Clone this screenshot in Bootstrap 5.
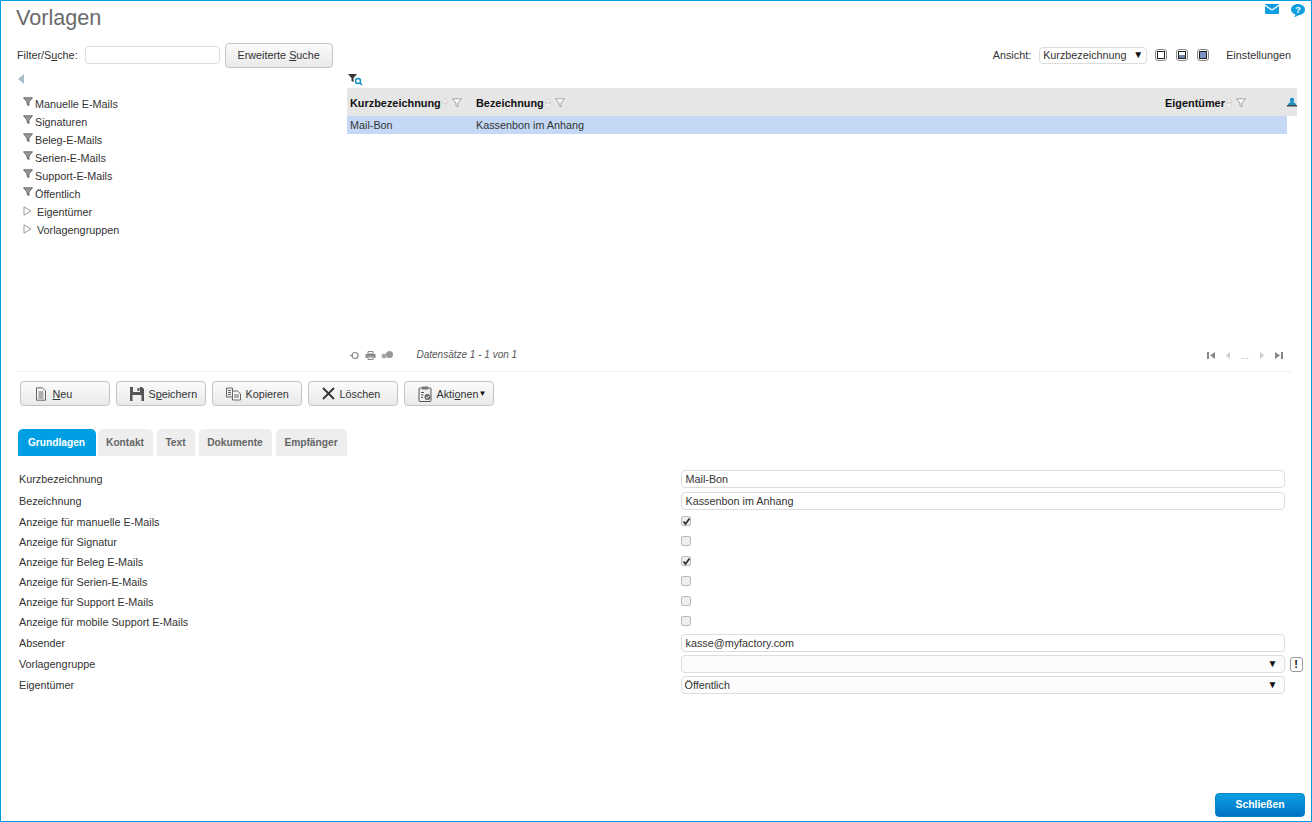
<!DOCTYPE html>
<html lang="de">
<head>
<meta charset="utf-8">
<title>Vorlagen</title>
<link href="https://cdn.jsdelivr.net/npm/bootstrap@5.3.0/dist/css/bootstrap.min.css" rel="stylesheet">
<style>
html,body{height:100%;margin:0;overflow:hidden}
body{font-family:"Liberation Sans",Arial,sans-serif;font-size:10.8px;color:#333;background:#fff;line-height:14px}
.frame{height:822px;width:1312px;border:solid #009fe3;border-width:1.5px 1px 1px 1.5px;display:flex;flex-direction:column;position:relative}
.head-row{height:29px;padding:0 6px 0 15px}
.page-title{font-size:21.6px;line-height:34px;color:#6a6a6a;margin:0;font-weight:400}
.top-icons{gap:12px;padding-top:3px}
.filter-row{height:29px;margin-top:10.5px;padding:0 20px 0 16px}
.fld{height:18px;border:1px solid #ddd;border-radius:4px;background:#fff;padding:0 3px;font:inherit;color:#333;outline:0;box-sizing:border-box}
.fld-search{width:135px;margin:0 5px 0 7px}
.tool-btn{height:25px;border:1px solid #c4c4c4;border-radius:4px;background:linear-gradient(#fbfbfb,#e9e9e9);font-size:10.8px;color:#333;padding:0;line-height:23px;display:inline-flex;align-items:center;justify-content:center}
.tool-btn:hover{background:#eee;border-color:#c4c4c4;color:#333}
.search-btn{width:108px}
.view-sel{width:108px;height:17px;border:1px solid #ddd;border-radius:4px;padding:0 3px 0 3px;margin:0 8px 0 8px}
.view-box{width:12px;height:12px;margin-right:9px;display:block}
.settings-lnk{margin-left:8px;color:#333;margin-right:0}
.main-area{height:302px;display:flex;margin-left:15.5px;border-bottom:1px dotted #e2e2e2;margin-right:20px}
.tree-pane{width:330px;flex:none}
.collapse-arrow{display:block;margin:4px 0 0 1px}
.tree-list{list-style:none;margin:11px 0 0;padding:0 0 0 6px}
.tree-list li{height:18px;line-height:18px;display:flex;align-items:center;color:#333}
.tree-list svg{margin-right:2.5px;margin-top:-4px;flex:none}
.tree-list .expand svg{margin-right:5.5px;margin-top:-2px}
.grid-pane{width:950px;flex:none;display:flex;flex-direction:column}
.grid-tool{height:18px;padding-top:4px;padding-left:1px}
.grid-tbl{width:950px;table-layout:fixed;border-collapse:collapse;margin:0}
.grid-tbl th{height:28px;background:#e6e6e6;font-weight:700;color:#111;padding:2px 0 0 3.5px;white-space:nowrap;font-size:10.9px}
.grid-tbl td{height:18px;background:#c5d9f7;padding:0 0 0 3.5px;color:#333}
.grid-tbl td.off{background:#fff}
.grid-tbl svg{vertical-align:-1px;margin-left:1px}
.grid-fill{flex:1}
.pager{height:22px;color:#666;display:flex;align-items:flex-start;position:relative}
.pager-info{font-style:italic;margin-left:24px;font-size:10px;color:#555;line-height:14px;margin-top:-1px}
.pager-ic{gap:5px;padding:2px 0 0 3px}
.pager-nav{gap:10px;margin-left:auto;margin-right:14px;padding-top:3px;color:#aaa;font-size:9px;line-height:9px}
.action-row{height:25px;margin-top:9.5px;padding-left:18.5px;gap:6px}
.action-btn{width:90px;gap:5px;justify-content:flex-start;padding-left:13px}
.action-btn svg{flex:none}
.action-btn span{margin-top:1px}
.tabs-row{margin-top:23px;padding-left:16.5px;gap:4px;height:27px;border:0}
.tab-lnk{height:27px;display:block;background:#eee;color:#666;font-weight:700;font-size:10.2px;line-height:27px;text-align:center;border-radius:5px 5px 0 0;padding:0;text-decoration:none}
.tab-lnk:hover{color:#666}
.tab-on{background:#009fe3;color:#fff;margin-right:-2px}
.tab-on:hover{color:#fff}
.form-area{margin-top:12.5px;padding-left:18px}
.f-row{display:flex;align-items:center;height:21.5px}
.f-row.chk{height:20px}
.f-row.chk-end{margin-bottom:.5px}
.f-row.f-tight{height:21px}
.f-lab{width:661.5px;flex:none}
.f-in{width:604px;height:18px;border:1px solid #ddd;border-radius:4px;padding:0 4px;background:#fff;color:#333;display:flex;align-items:center;justify-content:space-between;box-sizing:border-box}
.f-sel{background:#fcfcfc;padding:0 6px 0 3px}
.tri{font-size:10px;color:#111;line-height:10px}
.mini-tri{font-size:8px;margin-left:-5px}
.chk-box{width:10px;height:10px;border:1px solid #bbb;border-radius:2px;background:#eee;margin:0 0 2px 0;display:block;position:relative}
.bang{width:13px;height:15px;border:1px solid #999;border-radius:3px;margin-left:5px;font-weight:700;font-size:11px;line-height:13px;text-align:center;color:#111}
.close-row{position:absolute;right:6px;bottom:4px}
.close-btn{width:90px;height:24px;background:linear-gradient(#0a9fe2,#0273c3);border:1px solid #0a83cc;border-radius:4px;color:#fff;font-weight:700;font-size:10.4px;padding:0;line-height:22px}
.close-btn:hover{background:#0a8fd2;color:#fff;border-color:#0a83cc}
u{text-underline-offset:1px}
</style>
</head>
<body>
<svg width="0" height="0" class="position-absolute">
<defs>
<symbol id="funnel" viewBox="0 0 10 10"><path d="M.5.8h9L6 5v3.6L4 7.4V5z" fill="#999" stroke="#555" stroke-width=".8"/></symbol>
<symbol id="funnel-o" viewBox="0 0 10 10"><path d="M.5.8h9L6 5v3.8L4 7.6V5z" fill="#fff" stroke="#999" stroke-width=".9"/></symbol>
<symbol id="expand" viewBox="0 0 9 10"><path d="M1 .8 8 5 1 9.2z" fill="#fff" stroke="#999" stroke-width="1"/></symbol>
<symbol id="sort-up" viewBox="0 0 7 11"><path d="M3.500 0 0 5.500h7z" fill="#f4f4f4" stroke="#c4c4c4" stroke-width=".7"/></symbol>
<symbol id="sort" viewBox="0 0 7 11"><path d="M3.500 0 0 5h7z" fill="#f4f4f4" stroke="#c4c4c4" stroke-width=".7"/><path d="M3.500 11 0 6h7z" fill="#f4f4f4" stroke="#d4d4d4" stroke-width=".7"/></symbol>
<symbol id="x-doc" viewBox="0 0 14 14"><path d="M2.500.8h6l3 3v9.400h-9z" fill="#f4f4f4" stroke="#666"/><path d="M4.500 5h5M4.500 7h5M4.500 9h5M4.500 11h5" stroke="#666"/></symbol>
</defs>
</svg>
<div class="frame">
  <div class="head-row d-flex justify-content-between align-items-start">
    <h1 class="page-title">Vorlagen</h1>
    <div class="top-icons d-flex">
      <svg width="14" height="10" viewBox="0 0 14 10"><rect width="14" height="10" rx="1" fill="#0f9fe0"/><path d="M0 1.200 7 6l7-4.800" fill="none" stroke="#fff" stroke-width="1.200"/></svg>
      <svg width="14" height="13" viewBox="0 0 14 13"><path d="M7 0c3.900 0 7 2.400 7 5.600s-3 5.600-6.600 5.600c-.9.8-2.400 1.500-4.200 1.700.8-.7 1.100-1.500 1.200-2.300C1.900 9.700 0 7.900 0 5.600 0 2.400 3.100 0 7 0z" fill="#0f9fe0"/><text x="7" y="9" text-anchor="middle" font-size="9" font-weight="700" fill="#fff" font-family="Liberation Sans">?</text></svg>
    </div>
  </div>
  <div class="filter-row d-flex align-items-center">
    <label for="q" class="m-0">Filter/S<u>u</u>che:</label>
    <input id="q" class="fld fld-search" type="text">
    <button type="button" class="btn tool-btn search-btn">Erweiterte&nbsp;<u>S</u>uche</button>
    <span class="ms-auto">Ansicht:</span>
    <div class="view-sel d-flex justify-content-between align-items-center"><span>Kurzbezeichnung</span><span class="tri">▼</span></div>
    <svg class="view-box" viewBox="0 0 12 12"><rect x=".5" y=".5" width="11" height="11" rx="2.500" fill="#fff" stroke="#888"/><rect x="2.500" y="2.500" width="7" height="7" fill="#fff" stroke="#222"/></svg>
    <svg class="view-box" viewBox="0 0 12 12"><rect x=".5" y=".5" width="11" height="11" rx="2.500" fill="#fff" stroke="#888"/><rect x="2.500" y="2.500" width="7" height="7" fill="#fff" stroke="#222"/><rect x="3" y="6" width="6" height="3" fill="#6d82a8"/></svg>
    <svg class="view-box" viewBox="0 0 12 12"><rect x=".5" y=".5" width="11" height="11" rx="2.500" fill="#fff" stroke="#888"/><rect x="2.500" y="2.500" width="7" height="7" fill="#7c94c4" stroke="#222"/></svg>
    <span class="settings-lnk">Einstellungen</span>
  </div>
  <div class="main-area">
    <div class="tree-pane">
      <svg class="collapse-arrow" width="6" height="10" viewBox="0 0 6 10"><path d="M6 0v10L0 5z" fill="#a9c0c8"/></svg>
      <ul class="tree-list">
        <li><svg width="10" height="10"><use href="#funnel"/></svg>Manuelle E-Mails</li>
        <li><svg width="10" height="10"><use href="#funnel"/></svg>Signaturen</li>
        <li><svg width="10" height="10"><use href="#funnel"/></svg>Beleg-E-Mails</li>
        <li><svg width="10" height="10"><use href="#funnel"/></svg>Serien-E-Mails</li>
        <li><svg width="10" height="10"><use href="#funnel"/></svg>Support-E-Mails</li>
        <li><svg width="10" height="10"><use href="#funnel"/></svg>Öffentlich</li>
        <li class="expand"><svg width="9" height="10"><use href="#expand"/></svg>Eigentümer</li>
        <li class="expand"><svg width="9" height="10"><use href="#expand"/></svg>Vorlagengruppen</li>
      </ul>
    </div>
    <div class="grid-pane">
      <div class="grid-tool"><svg width="15" height="12" viewBox="0 0 15 12" class="d-block"><path d="M0 0h9L5.500 4v4L3.500 7V4z" fill="#333"/><circle cx="10" cy="7" r="2.500" fill="none" stroke="#0f8fc0" stroke-width="1.500"/><path d="m12 9 2 2" stroke="#0f8fc0" stroke-width="1.500"/></svg></div>
      <table class="grid-tbl">
        <colgroup><col style="width:126px"><col style="width:689px"><col style="width:125px"><col style="width:10px"></colgroup>
        <thead><tr>
          <th>Kurzbezeichnung<svg width="6" height="10"><use href="#sort-up"/></svg><svg width="10" height="10" class="ms-1"><use href="#funnel-o"/></svg></th>
          <th>Bezeichnung<svg width="6" height="10"><use href="#sort"/></svg><svg width="10" height="10" class="ms-1"><use href="#funnel-o"/></svg></th>
          <th>Eigentümer<svg width="6" height="10"><use href="#sort"/></svg><svg width="10" height="10" class="ms-1"><use href="#funnel-o"/></svg></th>
          <th class="p-0"><svg width="10" height="10" viewBox="0 0 10 10" class="d-block m-0"><circle cx="5" cy="3" r="2.200" fill="#1b8fc4"/><path d="M1 8c0-2 2-3 4-3s4 1 4 3z" fill="#1b8fc4"/><path d="M0 8h10v1.500H0z" fill="#444"/></svg></th>
        </tr></thead>
        <tbody><tr><td>Mail-Bon</td><td>Kassenbon im Anhang</td><td></td><td class="off"></td></tr></tbody>
      </table>
      <div class="grid-fill"></div>
      <div class="pager">
        <div class="pager-ic d-flex">
          <svg width="10" height="9" viewBox="0 0 10 9"><circle cx="5" cy="4.500" r="3" fill="none" stroke="#888" stroke-width="1.200"/><path d="M0 4.500h3" stroke="#888"/></svg>
          <svg width="11" height="9" viewBox="0 0 11 9"><path d="M3 .5h5v2.500H3z" fill="#fff" stroke="#888"/><path d="M.5 3h10v4H8.500V5.500h-6V7H.5z" fill="#888"/><path d="M3 6h5v2.500H3z" fill="#fff" stroke="#888"/></svg>
          <svg width="12" height="9" viewBox="0 0 12 9"><circle cx="3" cy="5" r="2.500" fill="#aaa"/><circle cx="8.500" cy="3.500" r="3.500" fill="#999"/></svg>
        </div>
        <span class="pager-info">Datensätze 1 - 1 von 1</span>
        <div class="pager-nav d-flex">
          <svg width="9" height="7" viewBox="0 0 9 7"><path d="M0 0h2v7H0zM8 0v7L3 3.500z" fill="#888"/></svg>
          <svg width="5" height="7" viewBox="0 0 5 7"><path d="M4 0v7L0 3.500z" fill="#ccc"/></svg>
          <span>...</span>
          <svg width="5" height="7" viewBox="0 0 5 7"><path d="M1 0v7l4-3.500z" fill="#ccc"/></svg>
          <svg width="9" height="7" viewBox="0 0 9 7"><path d="M1 0v7l5-3.500zM7 0h2v7H7z" fill="#888"/></svg>
        </div>
      </div>
    </div>
  </div>
  <div class="action-row d-flex">
    <button type="button" class="btn tool-btn action-btn"><svg width="14" height="14"><use href="#x-doc"/></svg><span><u>N</u>eu</span></button>
    <button type="button" class="btn tool-btn action-btn"><svg width="14" height="14" viewBox="0 0 14 14"><path d="M0 0h12l2 2v12H0z" fill="#555"/><path d="M3 0h7v5H3z" fill="#eee"/><path d="M7.500 1h2v3h-2z" fill="#555"/><path d="M2.500 8h9v6h-9z" fill="#eee"/></svg><span>S<u>p</u>eichern</span></button>
    <button type="button" class="btn tool-btn action-btn"><svg width="15" height="14" viewBox="0 0 15 14"><path d="M.5 1h6v9h-6z" fill="#eee" stroke="#666"/><path d="M6.500 4h5l3 3v6h-8z" fill="#f8f8f8" stroke="#666"/><path d="M2 3.500h3M2 5.500h3M2 7.500h3M8 8h5M8 10h5" stroke="#666"/></svg><span>Kopieren</span></button>
    <button type="button" class="btn tool-btn action-btn"><svg width="13" height="13" viewBox="0 0 13 13"><path d="M1 1l11 11M12 1 1 12" stroke="#333" stroke-width="1.800"/></svg><span>Löschen</span></button>
    <button type="button" class="btn tool-btn action-btn"><svg width="14" height="16" viewBox="0 0 13 16"><rect x=".5" y="2" width="12" height="13.500" rx="1" fill="#eee" stroke="#555"/><rect x="3.500" y=".5" width="6" height="3" fill="#777"/><path d="M2.500 6.500h3M2.500 9h2.500M2.500 11.500h2" stroke="#555"/><circle cx="9" cy="11" r="3" fill="#666"/><path d="m7.500 11 1.200 1.200 2-2.400" fill="none" stroke="#fff"/></svg><span>Akti<u>o</u>nen</span><span class="tri mini-tri">▼</span></button>
  </div>
  <ul class="nav tabs-row list-unstyled mb-0">
    <li><a class="tab-lnk tab-on" style="width:78px" href="#">Grundlagen</a></li>
    <li><a class="tab-lnk" style="width:55px" href="#">Kontakt</a></li>
    <li><a class="tab-lnk" style="width:38px" href="#">Text</a></li>
    <li><a class="tab-lnk" style="width:73px" href="#">Dokumente</a></li>
    <li><a class="tab-lnk" style="width:71px" href="#">Empfänger</a></li>
  </ul>
  <div class="form-area">
    <div class="f-row"><span class="f-lab">Kurzbezeichnung</span><div class="f-in">Mail-Bon</div></div>
    <div class="f-row"><span class="f-lab">Bezeichnung</span><div class="f-in">Kassenbon im Anhang</div></div>
    <div class="f-row chk"><span class="f-lab">Anzeige für manuelle E-Mails</span><span class="chk-box"><svg class="position-absolute top-0 start-0" width="9" height="9" viewBox="0 0 9 9"><path d="M1.500 4.500 3.500 7 7.500 1.500" fill="none" stroke="#333" stroke-width="1.800"/></svg></span></div>
    <div class="f-row chk"><span class="f-lab">Anzeige für Signatur</span><span class="chk-box"></span></div>
    <div class="f-row chk"><span class="f-lab">Anzeige für Beleg E-Mails</span><span class="chk-box"><svg class="position-absolute top-0 start-0" width="9" height="9" viewBox="0 0 9 9"><path d="M1.500 4.500 3.500 7 7.500 1.500" fill="none" stroke="#333" stroke-width="1.800"/></svg></span></div>
    <div class="f-row chk"><span class="f-lab">Anzeige für Serien-E-Mails</span><span class="chk-box"></span></div>
    <div class="f-row chk"><span class="f-lab">Anzeige für Support E-Mails</span><span class="chk-box"></span></div>
    <div class="f-row chk chk-end"><span class="f-lab">Anzeige für mobile Support E-Mails</span><span class="chk-box"></span></div>
    <div class="f-row"><span class="f-lab">Absender</span><div class="f-in">kasse@myfactory.com</div></div>
    <div class="f-row f-tight"><span class="f-lab">Vorlagengruppe</span><div class="f-in f-sel"><span></span><span class="tri">▼</span></div><span class="bang">!</span></div>
    <div class="f-row"><span class="f-lab">Eigentümer</span><div class="f-in f-sel"><span>Öffentlich</span><span class="tri">▼</span></div></div>
  </div>
  <div class="close-row"><button type="button" class="btn close-btn">Schließen</button></div>
</div>
<script src="https://cdn.jsdelivr.net/npm/bootstrap@5.3.0/dist/js/bootstrap.bundle.min.js"></script>
</body>
</html>
